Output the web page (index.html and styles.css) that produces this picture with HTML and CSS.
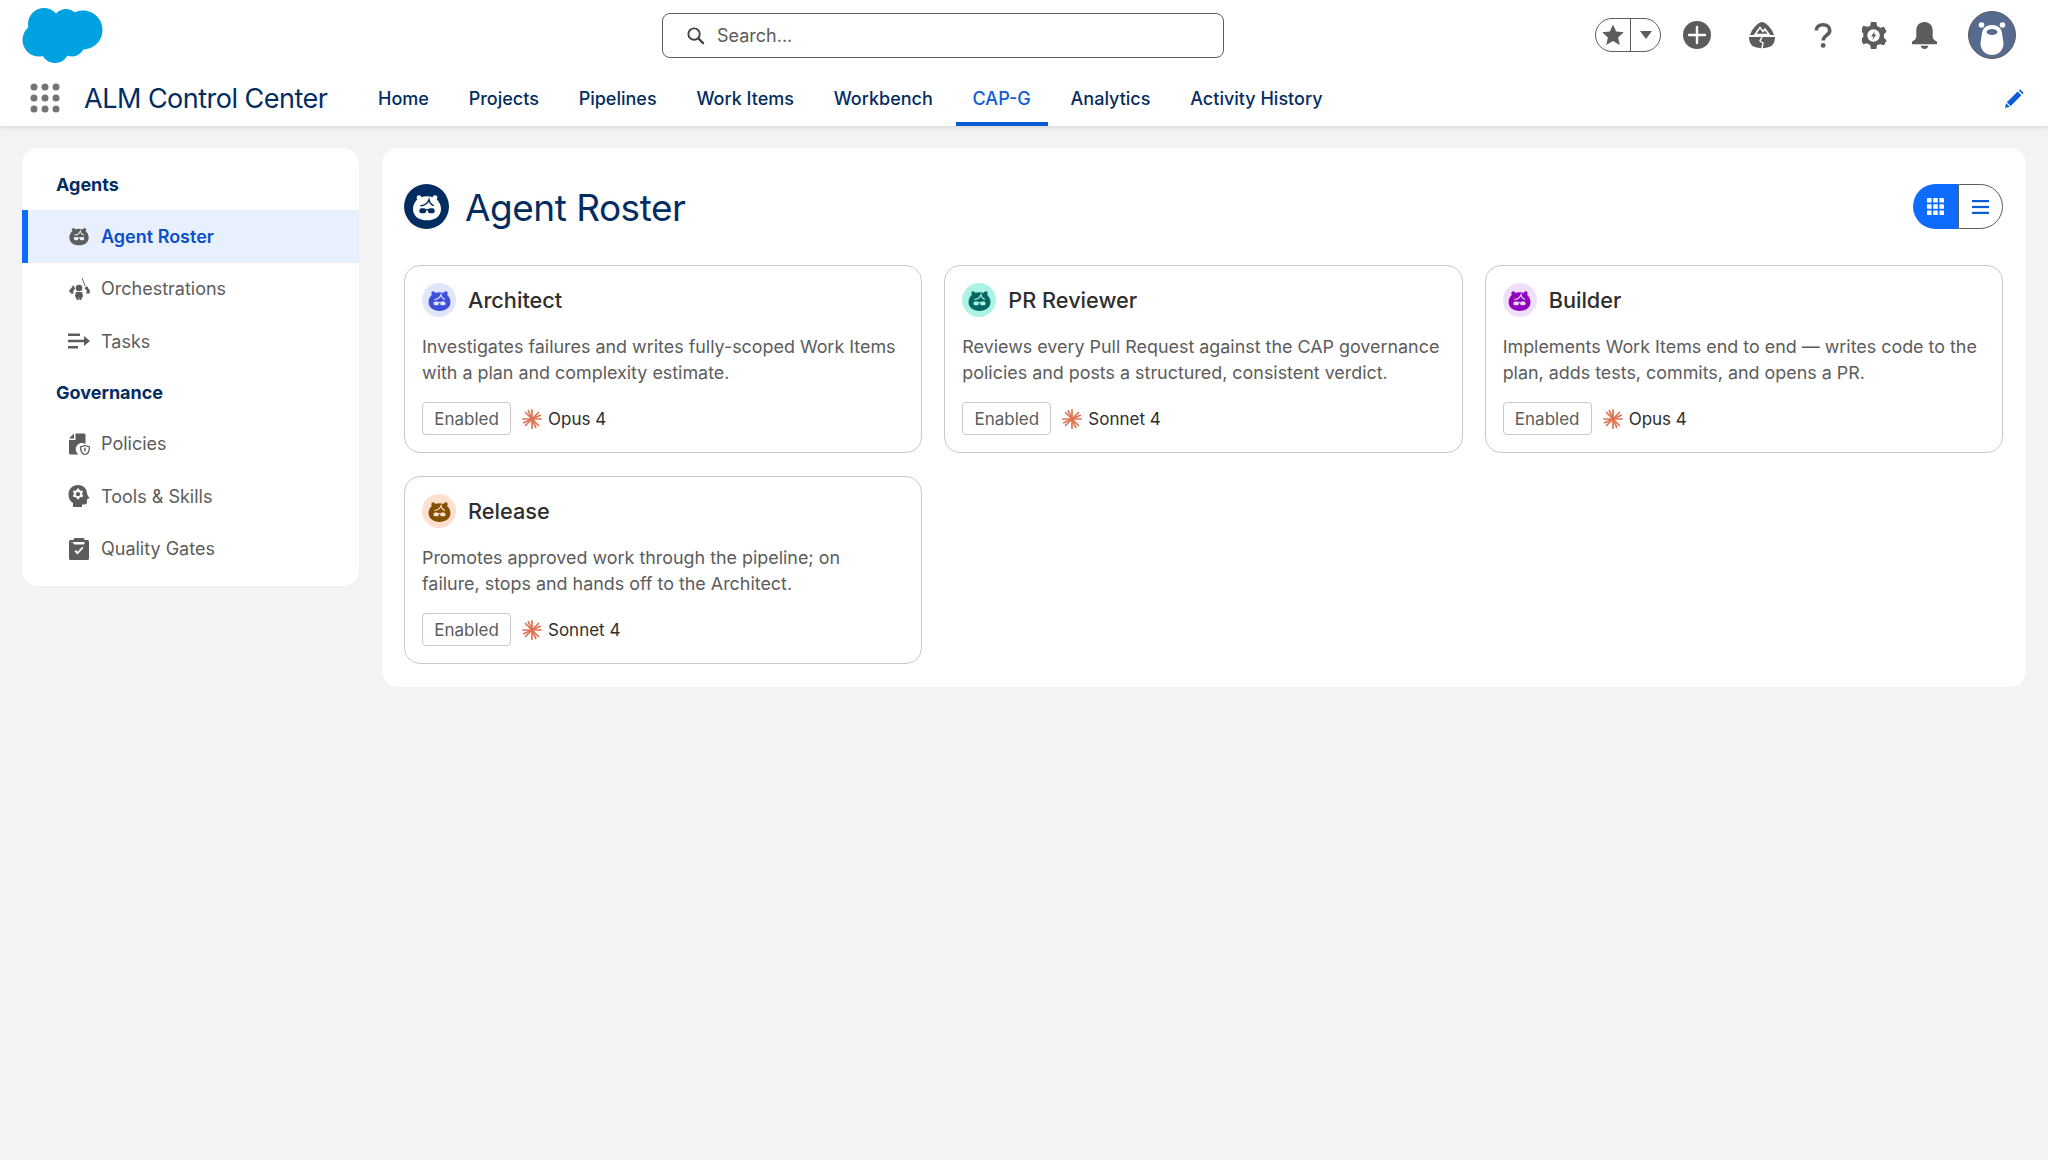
FILE: index.html
```html
<!DOCTYPE html>
<html>
<head>
	<title>Agent Roster</title>
	<meta charset="utf-8"/>
	<link rel="stylesheet" href="styles.css">
</head>
<body>

<svg class="defs" width="0" height="0">
	<defs>
		<mask id="faceCut" maskUnits="userSpaceOnUse" x="0" y="0" width="24" height="24">
			<rect width="24" height="24" fill="#fff"/>
			<path d="M7.500 11c2.600-.2 4.800-1.500 6-4.500.3 2 1.400 3.500 3.200 4.400" fill="none" stroke="#000" stroke-width="1.100" stroke-linecap="round"/>
			<rect x="6.300" y="13" width="5" height="3.600" rx="1.500" fill="#000"/>
			<rect x="12.700" y="13" width="5" height="3.600" rx="1.500" fill="#000"/>
			<rect x="11" y="13.500" width="2" height="1" fill="#000"/>
		</mask>
		<symbol id="face" viewBox="0 0 24 24">
			<g mask="url(#faceCut)">
				<circle cx="6" cy="5" r="1.800"/>
				<circle cx="18" cy="5" r="1.800"/>
				<path d="M12 4c6.500 0 10.500 4.500 10.500 9.500 0 5.500-4.500 8.500-10.500 8.500S1.500 19 1.500 13.500C1.500 8.500 5.500 4 12 4z"/>
			</g>
		</symbol>
		<symbol id="spark" viewBox="0 0 24 24">
			<g fill="none" stroke="#dc7350" stroke-width="2" stroke-linecap="round">
				<path d="M12 12 12 1M12 12 12 23M12 12 1 12M12 12 23 12"/>
				<path d="M12 12 4.200 4.200M12 12 19.800 4.200M12 12 4.200 19.800M12 12 19.800 19.800"/>
				<path d="M12 12 7.500 2M12 12 16.500 22M12 12 22 7.500M12 12 2 16.500"/>
			</g>
		</symbol>
	</defs>
</svg>

<header class="header">
	<div class="top">
		<svg class="logo" viewBox="0 0 81 56">
			<g fill="#00a1e0">
				<circle cx="22" cy="17" r="16"/>
				<circle cx="44" cy="15" r="13"/>
				<circle cx="61" cy="23" r="19.5"/>
				<circle cx="17" cy="33" r="16.5"/>
				<circle cx="33" cy="42" r="14"/>
				<circle cx="50" cy="37" r="12.5"/>
				<rect x="16" y="14" width="44" height="26"/>
			</g>
		</svg>
		<div class="search">
			<svg class="search-icon" viewBox="0 0 20 20"><circle cx="8.500" cy="8.500" r="6" fill="none" stroke="#444" stroke-width="2"/><path d="M13 13l5 5" stroke="#444" stroke-width="2.400" stroke-linecap="round"/></svg>
			<span>Search...</span>
		</div>
		<div class="actions">
			<div class="fav">
				<span class="fav-star"><svg viewBox="0 0 24 24" width="24" height="24"><path d="M12 1.500l3.200 7 7.600.8-5.700 5.100 1.600 7.600-6.700-3.900L5.300 22l1.600-7.600L1.200 9.300l7.600-.8z" fill="#5c5c5c"/></svg></span>
				<span class="fav-drop"><svg viewBox="0 0 12 8" width="12" height="8"><path d="M0 0h12L6 8z" fill="#5c5c5c"/></svg></span>
			</div>
			<svg class="act act-plus" viewBox="0 0 28 28"><circle cx="14" cy="14" r="14" fill="#5c5c5c"/><path d="M14 6v16M6 14h16" stroke="#fff" stroke-width="2.400" stroke-linecap="round"/></svg>
			<svg class="act act-trail" viewBox="0 0 28 27"><path d="M14 0C19 1 24 7 26 13H2C4 7 9 1 14 0z" fill="#5c5c5c"/><path d="M7 12.500l5-7 3 4 2-2.500 4 5.500z" fill="none" stroke="#fff" stroke-width="1.600"/><path d="M1 15h26c0 5-2 9-6 10-4 1.500-10 1.500-14 0-4-1-6-5-6-10z" fill="#5c5c5c"/><path d="M14 15l-2 4 3 2-1 5" fill="none" stroke="#fff" stroke-width="1.400"/></svg>
			<svg class="act act-help" viewBox="0 0 20 28"><path d="M2.500 8.500C2.500 4.500 5.500 2 10 2s7.500 2.500 7.500 6.500c0 5.500-7.300 5.300-7.300 11" fill="none" stroke="#5c5c5c" stroke-width="4"/><circle cx="10.200" cy="25" r="2.700" fill="#5c5c5c"/></svg>
			<svg class="act act-gear" viewBox="0 0 26 28"><path d="M10 0h6l1 4 3.500 2 4-1.200 3 5-3 3v3.400l3 3-3 5-4-1.200L17 24l-1 4h-6l-1-4-3.500-2-4 1.200-3-5 3-3v-3.400l-3-3 3-5 4 1.200L9 4z" transform="scale(.93 1)" fill="#5c5c5c"/><circle cx="12" cy="14" r="6.500" fill="#fff"/><path d="M13.500 9l-4 6h2.500l-1.500 4 4.500-6h-2.500z" fill="#5c5c5c"/></svg>
			<svg class="act act-bell" viewBox="0 0 28 28"><path d="M14 0c5.500 0 8.500 4 8.500 9v6c0 3 2.500 4 4.500 5.500V23H1v-2.500C3 19 5.500 18 5.500 15V9C5.500 4 8.500 0 14 0z" fill="#5c5c5c"/><path d="M10 24.500h8c-.5 2-2 3.500-4 3.500s-3.500-1.500-4-3.500z" fill="#5c5c5c"/></svg>
			<svg class="avatar" viewBox="0 0 48 48"><circle cx="24" cy="24" r="23.500" fill="#566b8f" stroke="#5c5c5c"/><circle cx="13.500" cy="14" r="2.800" fill="#fff"/><circle cx="34.500" cy="14" r="2.800" fill="#fff"/><path d="M24 14c6 0 9 3 10 8l1.500 10c0 8-5.500 12-11.500 12s-11.500-4-11.500-12L14 22c1-5 4-8 10-8z" fill="#fff"/><ellipse cx="24" cy="21" rx="5.500" ry="3" fill="#566b8f"/></svg>
		</div>
	</div>
	<nav class="nav">
		<svg class="launcher" viewBox="0 0 30 30">
			<g fill="#747474">
				<circle cx="4" cy="4" r="3.500"/><circle cx="15" cy="4" r="3.500"/><circle cx="26" cy="4" r="3.500"/>
				<circle cx="4" cy="15" r="3.500"/><circle cx="15" cy="15" r="3.500"/><circle cx="26" cy="15" r="3.500"/>
				<circle cx="4" cy="26" r="3.500"/><circle cx="15" cy="26" r="3.500"/><circle cx="26" cy="26" r="3.500"/>
			</g>
		</svg>
		<span class="app-name">ALM Control Center</span>
		<div class="tabs">
			<a class="tab">Home</a>
			<a class="tab">Projects</a>
			<a class="tab">Pipelines</a>
			<a class="tab">Work Items</a>
			<a class="tab">Workbench</a>
			<a class="tab active">CAP-G</a>
			<a class="tab">Analytics</a>
			<a class="tab">Activity History</a>
		</div>
		<svg class="pencil" viewBox="0 0 20 20"><path d="M14.500 1.500l1.200-1.200 4 4-1.200 1.200zM13.300 2.700l4 4L6 18 2 14zM1.200 15l3.800 3.800L0 20z" fill="#0b5cd5"/></svg>
	</nav>
</header>

<div class="page">
	<aside class="side">
		<h3>Agents</h3>
		<a class="item selected"><svg class="item-icon"><use href="#face"/></svg>Agent Roster</a>
		<a class="item">
			<svg class="item-icon" viewBox="0 0 22 22"><circle cx="11" cy="10" r="3.300"/><path d="M8 14h6l1 4-2 4h-1.500l-.5-3-.5 3H9l-2-4zM5.500 7L1 13l2 2.500h3L5 13.500l2-3zM16.500 10l2.500 3-1 2.500h3.500L22 13l-3-5zM14.500 0l3 8-.8.300-3-8z"/></svg>
			Orchestrations
		</a>
		<a class="item">
			<svg class="item-icon" viewBox="0 0 22 22"><path d="M0 3.500h12v2.400H0zM0 9.800h16V6l6 5-6 5v-3.800H0zM0 16h10v2.400H0z"/></svg>
			Tasks
		</a>
		<h3 class="gov">Governance</h3>
		<a class="item">
			<svg class="item-icon" viewBox="0 0 22 22"><path d="M1 5.500L6 .5v5zM7.500.5H16a1.500 1.500 0 0 1 1.500 1.500v9a6 6 0 0 0-7 10.500H2.500A1.500 1.500 0 0 1 1 20V7h6.500z"/><path d="M17 12.500l4.500 1.500c0 4-1 6.500-4.500 8-3.500-1.500-4.500-4-4.500-8z" fill="none" stroke="currentColor" stroke-width="1.300"/><path d="M16.300 14.800h1.400v3.400h-1.400z"/></svg>
			Policies
		</a>
		<a class="item">
			<svg class="item-icon" viewBox="0 0 22 22"><path fill-rule="evenodd" d="M10 0c5.500 0 9 3.700 9 8.500 0 1 1.700 3.200 2.500 4.700l-2.500 1V17c0 1.500-1 2.500-2.500 2.500H14V22H5v-4C2 16.500.5 13 .5 9.500.5 4 4.500 0 10 0zm-1 3.500l-.4 1.500-1.300.8-1.500-.4-1 1.700 1.100 1v1.500l-1.100 1 1 1.700 1.500-.4 1.300.8.400 1.500h2l.4-1.500 1.300-.8 1.500.4 1-1.700-1.100-1V8.100l1.100-1-1-1.700-1.500.4-1.300-.8L11 3.500zm1 3.600a2.100 2.100 0 1 1 0 4.200 2.100 2.100 0 0 1 0-4.200z"/></svg>
			Tools &amp; Skills
		</a>
		<a class="item">
			<svg class="item-icon" viewBox="0 0 22 22"><path fill-rule="evenodd" d="M7 0h8a1.500 1.500 0 0 1 1.500 1.500V2h3A1.500 1.500 0 0 1 21 3.500v17a1.500 1.500 0 0 1-1.500 1.500h-17A1.500 1.500 0 0 1 1 20.500v-17A1.500 1.500 0 0 1 2.500 2h3v-.5A1.500 1.500 0 0 1 7 0zM5.500 4H3.300v.5h2.200zm11 0v1.500a1 1 0 0 1-1 1h-9a1 1 0 0 1-1-1V4zM6.500 13.500l3 3 6-6.500-1.300-1.200-4.700 5-1.700-1.700z"/></svg>
			Quality Gates
		</a>
	</aside>

	<main class="panel">
		<div class="panel-head">
			<span class="title-icon"><svg><use href="#face"/></svg></span>
			<h1>Agent Roster</h1>
			<div class="toggle">
				<span class="toggle-grid"><svg viewBox="0 0 17 17" width="17" height="17" fill="#fff"><rect width="4.600" height="4.600" rx=".6"/><rect x="6.200" width="4.600" height="4.600" rx=".6"/><rect x="12.400" width="4.600" height="4.600" rx=".6"/><rect y="6.200" width="4.600" height="4.600" rx=".6"/><rect x="6.200" y="6.200" width="4.600" height="4.600" rx=".6"/><rect x="12.400" y="6.200" width="4.600" height="4.600" rx=".6"/><rect y="12.400" width="4.600" height="4.600" rx=".6"/><rect x="6.200" y="12.400" width="4.600" height="4.600" rx=".6"/><rect x="12.400" y="12.400" width="4.600" height="4.600" rx=".6"/></svg></span>
				<span class="toggle-list"><svg viewBox="0 0 17 14" width="17" height="14" fill="#0b5cd5"><rect width="17" height="2.200"/><rect y="5.900" width="17" height="2.200"/><rect y="11.800" width="17" height="2.200"/></svg></span>
			</div>
		</div>
		<div class="cards">
			<section class="card">
				<div class="card-head">
					<span class="agent-icon blue"><svg><use href="#face"/></svg></span>
					<h2>Architect</h2>
				</div>
				<p>Investigates failures and writes fully-scoped Work Items with a plan and complexity estimate.</p>
				<div class="card-foot">
					<span class="badge">Enabled</span>
					<svg class="spark"><use href="#spark"/></svg>
					<span class="model">Opus 4</span>
				</div>
			</section>
			<section class="card">
				<div class="card-head">
					<span class="agent-icon teal"><svg><use href="#face"/></svg></span>
					<h2>PR Reviewer</h2>
				</div>
				<p>Reviews every Pull Request against the CAP governance policies and posts a structured, consistent verdict.</p>
				<div class="card-foot">
					<span class="badge">Enabled</span>
					<svg class="spark"><use href="#spark"/></svg>
					<span class="model">Sonnet 4</span>
				</div>
			</section>
			<section class="card">
				<div class="card-head">
					<span class="agent-icon purple"><svg><use href="#face"/></svg></span>
					<h2>Builder</h2>
				</div>
				<p>Implements Work Items end to end — writes code to the plan, adds tests, commits, and opens a PR.</p>
				<div class="card-foot">
					<span class="badge">Enabled</span>
					<svg class="spark"><use href="#spark"/></svg>
					<span class="model">Opus 4</span>
				</div>
			</section>
			<section class="card">
				<div class="card-head">
					<span class="agent-icon orange"><svg><use href="#face"/></svg></span>
					<h2>Release</h2>
				</div>
				<p>Promotes approved work through the pipeline; on failure, stops and hands off to the Architect.</p>
				<div class="card-foot">
					<span class="badge">Enabled</span>
					<svg class="spark"><use href="#spark"/></svg>
					<span class="model">Sonnet 4</span>
				</div>
			</section>
		</div>
	</main>
</div>

</body>
</html>
```

FILE: styles.css
```css
* {
	margin: 0;
	padding: 0;
	box-sizing: border-box;
}

body {
	height: 1160px;
	overflow: hidden;
	background-color: #f3f3f3;
	font-family: Inter, "Liberation Sans", sans-serif;
	color: #5c5c5c;
}

.defs {
	display: block;
	height: 0;
}

.header {
	height: 126px;
	background-color: #fff;
	box-shadow: 0 2px 4px rgba(0, 0, 0, 0.1);
}

.top {
	display: flex;
	align-items: center;
	height: 70px;
	padding-left: 22px;
}
	.logo {
		width: 81px;
		height: 56px;
		flex: none;
	}
	.search {
		display: flex;
		align-items: center;
		width: 562px;
		height: 45px;
		margin-left: 559px;
		padding-left: 23px;
		border: 1.5px solid #5c5c5c;
		border-radius: 8px;
		font-size: 18px;
		color: #5c5c5c;
	}
		.search-icon {
			width: 19px;
			height: 19px;
			margin-right: 12px;
		}
	.actions {
		display: flex;
		align-items: center;
		margin-left: 371px;
		height: 50px;
	}
		.fav {
			display: flex;
			width: 66px;
			height: 34px;
			border: 1.5px solid #5c5c5c;
			border-radius: 17px;
		}
			.fav-star {
				display: flex;
				align-items: center;
				justify-content: center;
				width: 35px;
				border-right: 1.5px solid #5c5c5c;
			}
			.fav-drop {
				display: flex;
				align-items: center;
				justify-content: center;
				flex: 1;
			}
		.act {
			flex: none;
		}
		.act-plus {
			width: 28px;
			height: 28px;
			margin-left: 22px;
		}
		.act-trail {
			width: 28px;
			height: 27px;
			margin-left: 37px;
		}
		.act-help {
			width: 18px;
			height: 27px;
			margin-left: 38px;
		}
		.act-gear {
			width: 25px;
			height: 27px;
			margin-left: 30px;
		}
		.act-bell {
			width: 27px;
			height: 27px;
			margin-left: 24px;
		}
		.avatar {
			width: 48px;
			height: 48px;
			margin-left: 30px;
		}

.nav {
	display: flex;
	align-items: center;
	height: 56px;
	padding-left: 30px;
}
	.launcher {
		width: 30px;
		height: 30px;
		flex: none;
	}
	.app-name {
		margin-left: 24px;
		width: 257px;
		font-size: 27px;
		letter-spacing: -0.5px;
		color: #032d60;
		white-space: nowrap;
	}
	.tabs {
		display: flex;
		height: 56px;
		gap: 5.8px;
		margin-left: 20px;
	}
		.tab {
			display: flex;
			align-items: center;
			padding: 0 17px;
			font-size: 18px;
			font-weight: 500;
			color: #032d60;
			white-space: nowrap;
		}
		.tab.active {
			color: #0b5cd5;
			border-bottom: 4px solid #0b5cd5;
			padding-top: 4px;
		}
	.pencil {
		width: 19px;
		height: 19px;
		margin-left: auto;
		margin-right: 24px;
	}

.page {
	display: flex;
	align-items: flex-start;
	gap: 23px;
	padding: 22px 22px 0 22px;
}

.side {
	width: 337px;
	flex: none;
	padding: 10px 0 11px 0;
	background-color: #fff;
	border-radius: 16px;
}
	.side h3 {
		height: 52px;
		line-height: 54px;
		padding-left: 34px;
		font-size: 18px;
		font-weight: 700;
		color: #032d60;
	}
	.side h3.gov {
		height: 50px;
		line-height: 50px;
	}
	.item {
		display: flex;
		align-items: center;
		height: 52.5px;
		padding-left: 46px;
		font-size: 18px;
		color: #5c5c5c;
	}
	.item-icon {
		width: 22px;
		height: 22px;
		margin-right: 11px;
		fill: #5c5c5c;
		color: #5c5c5c;
	}
	.item.selected {
		padding-left: 40px;
		border-left: 6px solid #0b6cff;
		background-color: #e8f0fd;
		font-weight: 600;
		color: #0b4fc8;
	}

.panel {
	flex: 1;
	height: 539px;
	padding: 0 23px 0 22px;
	background-color: #fff;
	border-radius: 16px;
}
	.panel-head {
		display: flex;
		align-items: center;
		height: 117px;
	}
		.title-icon {
			display: flex;
			align-items: center;
			justify-content: center;
			width: 45px;
			height: 45px;
			border-radius: 50%;
			background-color: #032d60;
			fill: #fff;
		}
			.title-icon svg {
				width: 32px;
				height: 32px;
			}
		.panel-head h1 {
			margin-left: 16px;
			padding-top: 2px;
			font-size: 37px;
			font-weight: 400;
			letter-spacing: -0.5px;
			color: #032d60;
		}
		.toggle {
			display: flex;
			width: 90px;
			height: 45px;
			margin-left: auto;
		}
			.toggle-grid {
				display: flex;
				align-items: center;
				justify-content: center;
				width: 45px;
				background-color: #0b6cff;
				border-radius: 23px 0 0 23px;
			}
			.toggle-list {
				display: flex;
				align-items: center;
				justify-content: center;
				flex: 1;
				border: 1.5px solid #5c5c5c;
				border-radius: 0 23px 23px 0;
			}

.cards {
	display: grid;
	grid-template-columns: repeat(3, 1fr);
	gap: 23px 22px;
}
	.card {
		height: 188px;
		padding: 17px 17px 0 17px;
		border: 1.5px solid #c9c9c9;
		border-radius: 16px;
	}
		.card-head {
			display: flex;
			align-items: center;
			height: 34px;
		}
			.agent-icon {
				display: flex;
				align-items: center;
				justify-content: center;
				width: 34px;
				height: 34px;
				border-radius: 50%;
			}
				.agent-icon svg {
					width: 25px;
					height: 25px;
				}
			.blue {
				background-color: #e2e6fb;
				fill: #3d4fdb;
			}
			.teal {
				background-color: #acf3e4;
				fill: #056764;
			}
			.purple {
				background-color: #f0dffb;
				fill: #9002c0;
			}
			.orange {
				background-color: #fedfd0;
				fill: #825101;
			}
			.card-head h2 {
				margin-left: 12px;
				font-size: 21.7px;
				font-weight: 500;
				color: #2e2e2e;
			}
		.card p {
			margin-top: 17px;
			padding-right: 3px;
			font-size: 17.9px;
			line-height: 25.5px;
			color: #5c5c5c;
		}
		.card-foot {
			display: flex;
			align-items: center;
			margin-top: 17px;
		}
			.badge {
				display: flex;
				align-items: center;
				justify-content: center;
				width: 89px;
				height: 33px;
				border: 1.5px solid #c9c9c9;
				border-radius: 4px;
				font-size: 17px;
				color: #5c5c5c;
			}
			.spark {
				width: 20px;
				height: 20px;
				margin-left: 11px;
			}
			.model {
				margin-left: 6px;
				font-size: 17px;
				color: #2e2e2e;
			}
```
